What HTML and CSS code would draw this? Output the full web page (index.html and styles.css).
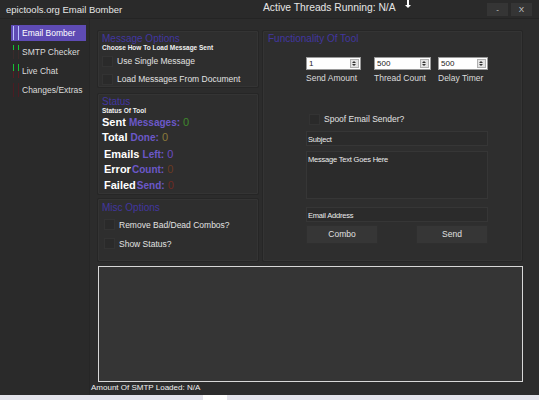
FILE: index.html
```html
<!doctype html>
<html lang="en">
<head>
    <meta charset="UTF-8">
    <title>epictools.org Email Bomber</title>
    <link rel="stylesheet" href="styles.css">
</head>
<body>
<div id="app">
    <!--标题栏-->
    <div class="titlebar">
        <div class="app-name">epictools.org Email Bomber</div>
        <div class="threads">Active Threads Running: N/A</div>
        <div class="cursor"></div>
        <div class="win-btns">
            <div class="win-btn">-</div>
            <div class="win-btn">X</div>
        </div>
    </div>

    <div class="body">
        <!--左侧菜单-->
        <div class="sidebar">
            <div class="nav active"><span class="mark blue"></span>Email Bomber</div>
            <div class="nav"><span class="mark green half"></span>SMTP Checker</div>
            <div class="nav"><span class="mark green"></span>Live Chat</div>
            <div class="nav"><span class="mark red"></span>Changes/Extras</div>
        </div>

        <div class="main">
            <div class="top">
                <div class="left-col">
                    <div class="panel msg-panel">
                        <div class="panel-title">Message Options</div>
                        <div class="panel-sub">Choose How To Load Message Sent</div>
                        <div class="check"><span class="box"></span>Use Single Message</div>
                        <div class="check"><span class="box"></span>Load Messages From Document</div>
                    </div>
                    <div class="panel status-panel">
                        <div class="panel-title">Status</div>
                        <div class="panel-sub">Status Of Tool</div>
                        <div class="stat">Sent <b>Messages:</b> <i class="n-green">0</i></div>
                        <div class="stat">Total <b>Done:</b> <i class="n-olive">0</i></div>
                        <div class="stat in">Emails <b>Left:</b> <i class="n-purple">0</i></div>
                        <div class="stat in">Error <b class="tight">Count:</b> <i class="n-brown">0</i></div>
                        <div class="stat in">Failed <b class="tight">Send:</b> <i class="n-red">0</i></div>
                    </div>
                    <div class="panel misc-panel">
                        <div class="panel-title">Misc Options</div>
                        <div class="check"><span class="box"></span>Remove Bad/Dead Combos?</div>
                        <div class="check"><span class="box"></span>Show Status?</div>
                    </div>
                </div>

                <div class="panel func-panel">
                    <div class="panel-title">Functionality Of Tool</div>
                    <div class="spins">
                        <div class="spin-item w1">
                            <div class="spin"><span>1</span><em></em></div>
                            <div class="spin-label">Send Amount</div>
                        </div>
                        <div class="spin-item w2">
                            <div class="spin"><span>500</span><em></em></div>
                            <div class="spin-label">Thread Count</div>
                        </div>
                        <div class="spin-item w3">
                            <div class="spin"><span>500</span><em></em></div>
                            <div class="spin-label">Delay Timer</div>
                        </div>
                    </div>
                    <div class="check spoof"><span class="box"></span>Spoof Email Sender?</div>
                    <div class="field">Subject</div>
                    <div class="field area">Message Text Goes Here</div>
                    <div class="field email">Email Address</div>
                    <div class="btns">
                        <div class="btn">Combo</div>
                        <div class="btn">Send</div>
                    </div>
                </div>
            </div>

            <div class="log"></div>
            <div class="footer">Amount Of SMTP Loaded: N/A</div>
        </div>
    </div>
    <div class="taskbar"><span></span></div>
</div>
</body>
</html>
```

FILE: styles.css
```css
*{
    padding: 0;
    margin: 0;
    box-sizing: border-box;
}
body{
    width: 539px;
    height: 400px;
    overflow: hidden;
    background: #2c2c2c;
    font-family: "Liberation Sans", Arial, sans-serif;
    color: #e6e6e6;
}
#app{
    height: 400px;
    display: flex;
    flex-direction: column;
}
/* 标题栏 */
.titlebar{
    height: 19px;
    display: flex;
    align-items: center;
    background: #2a2a2a;
    border-bottom: 1px solid #242424;
    position: relative;
}
.app-name{
    width: 263px;
    padding-left: 6px;
    font-size: 9.5px;
}
.threads{
    font-size: 10.3px;
    margin-top: -3px;
}
.cursor{
    position: absolute;
    left: 407px;
    top: 0;
    width: 2px;
    height: 7px;
    background: #fff;
}
.cursor:after{
    content: '';
    position: absolute;
    left: -2px;
    top: 5px;
    border: 3px solid transparent;
    border-top: 3px solid #fff;
}
.win-btns{
    margin-left: auto;
    margin-right: 7px;
    display: flex;
    gap: 3px;
}
.win-btn{
    width: 21px;
    height: 13px;
    background: #353535;
    color: #cfcfcf;
    font-size: 8px;
    text-align: center;
    line-height: 13px;
}
.body{
    flex: 1;
    display: flex;
}
/* 左侧菜单 */
.sidebar{
    width: 90px;
    padding: 6px 3px 0 11px;
    background: #2a2a2a;
    border-right: 1px solid #262626;
}
.nav{
    height: 16px;
    margin-bottom: 3px;
    display: flex;
    align-items: center;
    font-size: 8.5px;
    color: #dcdcdc;
}
.nav.active{
    background: #5e4bb4;
    color: #fff;
}
.mark{
    width: 6px;
    height: 14px;
    margin: 0 3px 0 2px;
    border-left: 1px solid #5a1a22;
    border-right: 1px solid #5a1a22;
}
.mark.blue{
    border-color: #b9c2ff;
}
.mark.green{
    border-image: linear-gradient(#18c234 50%, #5a1a22 50%) 1;
}
.mark.half{
    border-image: linear-gradient(#18c234 35%, #3a2a2a 35%) 1;
}
.mark.red{
    border-color: #4a1c22;
}
/* 主区域 */
.main{
    flex: 1;
    padding: 11px 16px 0 7px;
    display: flex;
    flex-direction: column;
}
.top{
    display: flex;
    gap: 3px;
    height: 232px;
}
.left-col{
    width: 162px;
    display: flex;
    flex-direction: column;
}
.panel{
    background: #2e2e2e;
    border: 1px solid #262626;
    box-shadow: inset 0 0 0 1px #343434;
    border-radius: 2px;
    padding: 2px 4px;
}
.panel-title{
    font-size: 10px;
    color: #4236a0;
    line-height: 11px;
}
.panel-sub{
    font-size: 6.5px;
    font-weight: bold;
    color: #f0f0f0;
    line-height: 8px;
}
.msg-panel{
    height: 58px;
}
.status-panel{
    height: 102px;
    margin-top: 5px;
}
.misc-panel{
    height: 64px;
    margin-top: 3px;
    padding-top: 3px;
}
.check{
    display: flex;
    align-items: center;
    height: 18px;
    font-size: 8.5px;
    color: #e2e2e2;
}
.box{
    width: 11px;
    height: 11px;
    margin-right: 4px;
    background: #2a2a2a;
    border: 1px solid #333;
}
.msg-panel .check:first-of-type{
    margin-top: 1px;
}
.misc-panel .check{
    padding-left: 2px;
    height: 19px;
}
.misc-panel .panel-title{
    margin-bottom: 2px;
}
.stat{
    font-size: 11px;
    font-weight: bold;
    color: #fff;
    height: 15.3px;
    line-height: 15px;
}
.stat.in{
    padding-left: 2px;
}
.stat:nth-of-type(5){
    margin-top: 1.5px;
}
.stat b{
    font-size: 10px;
    color: #6b58c8;
}
.stat b.tight{
    margin-left: -2px;
}
.stat i{
    font-style: normal;
    font-weight: normal;
}
.n-green{ color: #3f8a2c; }
.n-olive{ color: #8a7a3a; }
.n-purple{ color: #6a4ac4; }
.n-brown{ color: #6a3a22; }
.n-red{ color: #6e2a22; }
/* 右侧功能 */
.func-panel{
    flex: 1;
    padding: 2px 5px;
}
.spins{
    display: flex;
    margin: 13px 0 0 38px;
}
.spin-item{
    display: flex;
    flex-direction: column;
    align-items: center;
}
.w1{ width: 68px; }
.w2{ width: 64px; }
.w3{ width: 50px; }
.spin{
    align-self: flex-start;
    height: 13px;
    background: #fff;
    border: 1px solid #9a9a9a;
    display: flex;
    color: #222;
    font-size: 8px;
    line-height: 11px;
}
.w1 .spin{ width: 55px; }
.w2 .spin{ width: 57px; }
.w3 .spin{ width: 50px; }
.spin span{
    flex: 1;
    padding-left: 2px;
}
.spin em{
    width: 9px;
    margin: 1px;
    background: #e2e2e2;
    border: 1px solid #b0b0b0;
    position: relative;
}
.spin em:before, .spin em:after{
    content: '';
    position: absolute;
    left: 1px;
    border: 2px solid transparent;
}
.spin em:before{
    top: -1px;
    border-bottom: 2px solid #333;
}
.spin em:after{
    bottom: -1px;
    border-top: 2px solid #333;
}
.spin-label{
    align-self: flex-start;
    font-size: 8.5px;
    color: #dcdcdc;
    margin-top: 3px;
}
.spoof{
    margin: 27px 0 0 41px;
}
.field{
    width: 182px;
    margin-left: 38px;
    height: 15px;
    background: #2b2b2b;
    border: 1px solid #363636;
    font-size: 7.5px;
    letter-spacing: -0.2px;
    padding: 3px 1px;
    color: #ececec;
}
.spoof + .field{
    margin-top: 3px;
}
.field.area{
    height: 48px;
    margin-top: 5px;
}
.field.email{
    margin-top: 8px;
}
.btns{
    width: 182px;
    margin: 3px 0 0 38px;
    display: flex;
    justify-content: space-between;
}
.btn{
    width: 72px;
    height: 19px;
    background: #363636;
    border: 1px solid #2f2f2f;
    font-size: 8.5px;
    text-align: center;
    line-height: 17px;
    color: #e0e0e0;
}
/* 日志 */
.log{
    height: 116px;
    margin: 4px 0 0 1px;
    background: #353535;
    border: 1.5px solid #d8d8d8;
}
.footer{
    font-size: 8px;
    margin: 1px 0 0 -6px;
    color: #f0f0f0;
}
.taskbar{
    height: 5px;
    background: #e4e4ec;
    display: flex;
    justify-content: center;
    margin-top: auto;
}
.taskbar span{
    width: 24px;
    margin-left: -110px;
    background: #fff;
}
```
